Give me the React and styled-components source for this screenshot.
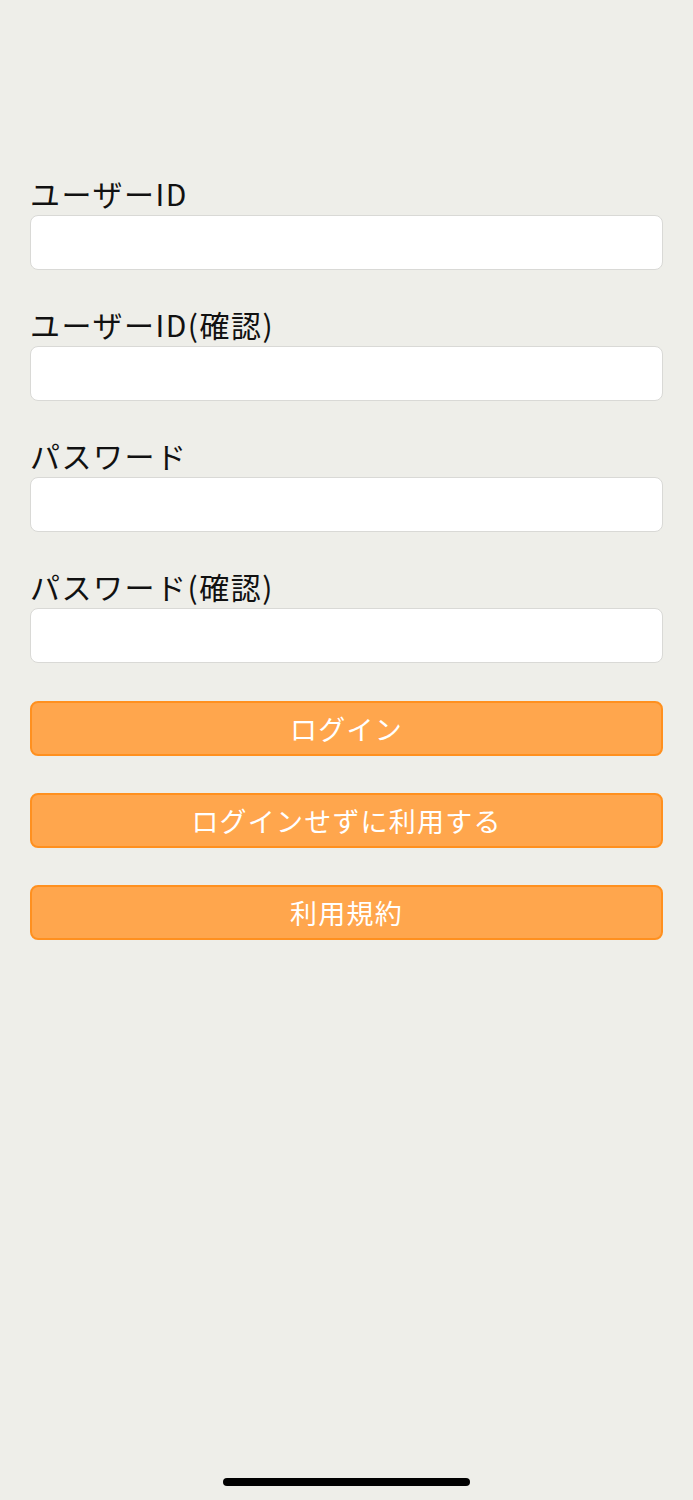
import React, { useState } from 'react';
import styled, { createGlobalStyle } from 'styled-components';

const GlobalStyle = createGlobalStyle`
  html, body {
    margin: 0;
    padding: 0;
    background: #eeeee9;
  }
  body {
    font-family: "Noto Sans CJK JP", "Noto Sans", sans-serif;
  }
`;

const Screen = styled.div`
  min-height: 1500px;
  box-sizing: border-box;
  padding: 175px 30px 0;
  display: flex;
  flex-direction: column;
`;

const Form = styled.form`
  display: flex;
  flex-direction: column;
`;

const Field = styled.div`
  display: flex;
  flex-direction: column;
  gap: 4px;
  margin-bottom: 36px;
`;

const Label = styled.label`
  font-size: 30px;
  line-height: 36px;
  color: #111;
  letter-spacing: 1.5px;
`;

const TextInput = styled.input`
  box-sizing: border-box;
  width: 100%;
  height: 55px;
  border: 1px solid #d9d9d6;
  border-radius: 8px;
  background: #fff;
  font-size: 24px;
  padding: 0 12px;
  font-family: inherit;
  outline: none;
`;

const Buttons = styled.div`
  display: flex;
  flex-direction: column;
  gap: 37px;
  margin-top: 2px;
`;

const ActionButton = styled.button`
  box-sizing: border-box;
  width: 100%;
  height: 55px;
  border: 2px solid #ff901f;
  border-radius: 8px;
  background: #ffa64d;
  color: #fff;
  font-size: 27px;
  letter-spacing: 1.2px;
  font-family: inherit;
  cursor: pointer;
  padding: 0;
`;

const HomeBar = styled.div`
  width: 247px;
  height: 8px;
  border-radius: 4px;
  background: #000;
  margin: auto auto 14px;
`;

const fields = [
  { key: 'userId', label: 'ユーザーID', type: 'text' },
  { key: 'userIdConfirm', label: 'ユーザーID(確認)', type: 'text' },
  { key: 'password', label: 'パスワード', type: 'password' },
  { key: 'passwordConfirm', label: 'パスワード(確認)', type: 'password' },
];

const App = () => {
  const [values, setValues] = useState({});

  const handleChange = (key) => (e) => {
    setValues({ ...values, [key]: e.target.value });
  };

  return (
    <>
      <GlobalStyle />
      <Screen>
        <Form onSubmit={(e) => e.preventDefault()}>
          {fields.map(f => (
            <Field key={f.key}>
              <Label htmlFor={f.key}>{f.label}</Label>
              <TextInput
                id={f.key}
                type={f.type}
                value={values[f.key] || ''}
                onChange={handleChange(f.key)}
              />
            </Field>
          ))}
          <Buttons>
            <ActionButton type="submit">ログイン</ActionButton>
            <ActionButton type="button">ログインせずに利用する</ActionButton>
            <ActionButton type="button">利用規約</ActionButton>
          </Buttons>
        </Form>
        <HomeBar />
      </Screen>
    </>
  );
};

export default App;
